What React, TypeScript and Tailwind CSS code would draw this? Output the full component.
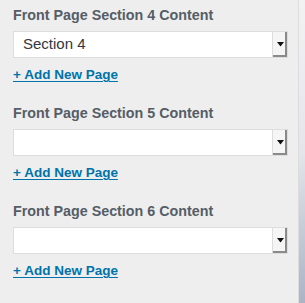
import React from "react";

function Section({ n, value }: { n: number; value: string }) {
  return (
    <div className="flex flex-col pl-[13px] pr-[12px]">
      <div className="text-[14.3px] font-bold leading-[18px] text-[#555d66] pt-[6px]">
        Front Page Section {n} Content
      </div>
      <div className="mt-[7px] flex h-[27px] w-[275px] border border-[#ddd] bg-white">
        <div className="flex-1 flex items-center pl-[9px] text-[15px] text-[#32373c]">{value}</div>
        <div className="relative w-[15px] h-full bg-[#f5f5f5] border-l border-[#ddd] shadow-[inset_-2px_-2px_0_#8a8a8a]">
          <svg className="absolute left-[4px] top-[10px]" width="7" height="5" viewBox="0 0 7 5">
            <path d="M0 0h7L3.5 4.5z" fill="#111" />
          </svg>
        </div>
      </div>
      <div className="mt-[9px] h-[16px] flex items-start text-[13.5px] leading-[16px]">
        <a className="block font-bold text-[#0073aa] underline underline-offset-[2px]">
          + Add New Page
        </a>
      </div>
    </div>
  );
}

export default function App() {
  return (
    <div className="flex w-[305px] h-[303px] overflow-hidden" style={{ fontFamily: '"Liberation Sans", Arial, sans-serif' }}>
      <div className="w-[299px] h-full bg-[#eeeeee] border-r border-[#dcdcdc] flex flex-col gap-[15px]">
        <Section n={4} value="Section 4" />
        <Section n={5} value="" />
        <Section n={6} value="" />
      </div>
      <div className="flex-1 h-full bg-gradient-to-b from-[#f2f2f4] via-[#e4e6ea] to-[#aab4c6]" />
    </div>
  );
}
